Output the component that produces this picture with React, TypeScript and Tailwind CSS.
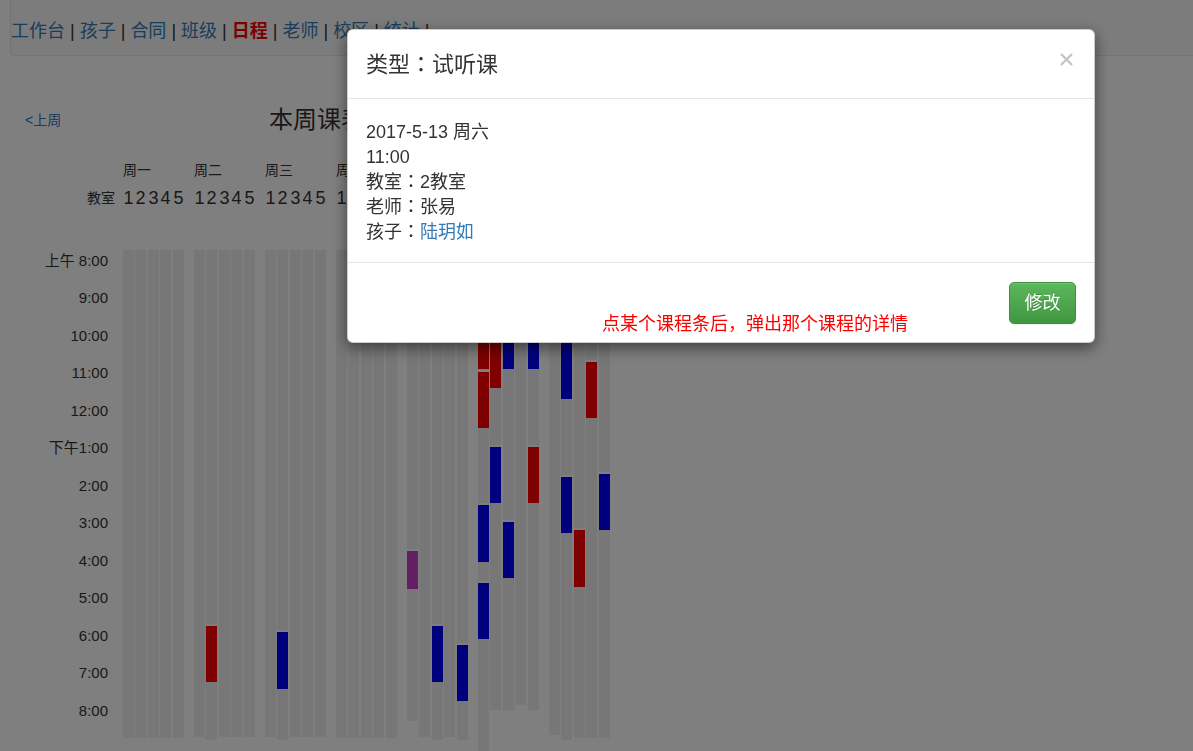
import React from 'react';

type Block = [number, number, 'r' | 'b' | 'p'];
interface Col {
  end: number;
  blocks: Block[];
}

const TOP = 250;

const BLOCK_BG: Record<Block[2], string> = {
  r: 'bg-[#ff0000]',
  b: 'bg-[#0000ff]',
  p: 'bg-[#c63fc9]',
};

const COL_GAP = ['', 'ml-[1px]', 'ml-[2px]', 'ml-[1px]', 'ml-[2px]'];

const plain = (end: number): Col => ({ end, blocks: [] });

const DAYS: { name: string; cols: Col[] }[] = [
  { name: '周一', cols: [plain(738), plain(738), plain(738), plain(738), plain(738)] },
  {
    name: '周二',
    cols: [plain(737), { end: 740, blocks: [[626, 682, 'r']] }, plain(737), plain(737), plain(737)],
  },
  {
    name: '周三',
    cols: [plain(737), { end: 740, blocks: [[632, 689, 'b']] }, plain(737), plain(737), plain(737)],
  },
  { name: '周四', cols: [plain(738), plain(738), plain(738), plain(738), plain(738)] },
  {
    name: '周五',
    cols: [
      { end: 721, blocks: [[551, 589, 'p']] },
      plain(737),
      { end: 740, blocks: [[626, 682, 'b']] },
      plain(737),
      { end: 740, blocks: [[645, 701, 'b']] },
    ],
  },
  {
    name: '周六',
    cols: [
      {
        end: 762,
        blocks: [
          [313, 369, 'r'],
          [372, 428, 'r'],
          [505, 562, 'b'],
          [583, 639, 'b'],
        ],
      },
      {
        end: 710,
        blocks: [
          [332, 388, 'r'],
          [447, 503, 'b'],
        ],
      },
      {
        end: 710,
        blocks: [
          [313, 369, 'b'],
          [522, 578, 'b'],
        ],
      },
      plain(705),
      {
        end: 710,
        blocks: [
          [313, 369, 'b'],
          [447, 503, 'r'],
        ],
      },
    ],
  },
  {
    name: '周日',
    cols: [
      plain(735),
      {
        end: 740,
        blocks: [
          [343, 399, 'b'],
          [477, 533, 'b'],
        ],
      },
      { end: 738, blocks: [[530, 587, 'r']] },
      { end: 738, blocks: [[362, 418, 'r']] },
      { end: 738, blocks: [[474, 530, 'b']] },
    ],
  },
];

const HOURS = [
  '上午 8:00',
  '9:00',
  '10:00',
  '11:00',
  '12:00',
  '下午1:00',
  '2:00',
  '3:00',
  '4:00',
  '5:00',
  '6:00',
  '7:00',
  '8:00',
];

const NAV = ['工作台', '孩子', '合同', '班级', '日程', '老师', '校区', '统计'];

function Column({ col, className }: { col: Col; className: string }) {
  const segs: React.ReactNode[] = [];
  let y = TOP;
  col.blocks.forEach(([top, bottom, c], i) => {
    const gap = top - y;
    if (gap > 2) {
      segs.push(<div key={`g${i}`} className="bg-[#eeeeee]" style={{ height: gap - 2 }} />);
      segs.push(<div key={`s${i}`} style={{ height: 2 }} />);
    } else if (gap > 0) {
      segs.push(<div key={`s${i}`} style={{ height: gap }} />);
    }
    segs.push(<div key={`b${i}`} className={BLOCK_BG[c]} style={{ height: bottom - top }} />);
    y = bottom;
  });
  if (col.end > y) {
    segs.push(<div key="end" className="bg-[#eeeeee]" style={{ height: col.end - y }} />);
  }
  return <div className={`flex w-[11px] shrink-0 flex-col ${className}`}>{segs}</div>;
}

export default function App() {
  return (
    <div className="relative h-[751px] overflow-hidden bg-white font-['Liberation_Sans','Noto_Sans_CJK_SC',sans-serif] text-[#333]">
      {/* top nav */}
      <div className="ml-[10px] flex h-[56px] w-[1200px] items-center rounded-bl-[4px] border-b border-l border-[#e7e7e7] bg-[#f9f9f9] pt-[7px] text-[18px] whitespace-pre">
        {NAV.map((item) => (
          <React.Fragment key={item}>
            <a className={item === '日程' ? 'font-bold text-[#ff0000]' : 'text-[#337ab7]'}>{item}</a>
            <span className="text-[#333]"> | </span>
          </React.Fragment>
        ))}
      </div>

      {/* week switcher + title */}
      <div className="mt-[44px] flex h-[40px] items-center">
        <div className="w-[269px] pl-[25px] text-[14px] text-[#337ab7]">&lt;上周</div>
        <h2 className="text-[24px] leading-none text-[#333]">本周课表</h2>
      </div>

      {/* day names */}
      <div className="mt-[20px] flex h-[20px] items-center pl-[123px] text-[14px]">
        {DAYS.map((d, i) => (
          <div key={d.name} className={`w-[61px] ${i ? 'ml-[10px]' : ''}`}>
            {d.name}
          </div>
        ))}
      </div>

      {/* classroom numbers */}
      <div className="mt-[6px] flex h-[24px] items-center">
        <div className="w-[123px] pr-[8px] text-right text-[14px]">教室</div>
        <div className="flex gap-[10px]">
          {DAYS.map((d) => (
            <div key={d.name} className="flex w-[61px] text-[18px] leading-none">
              {[1, 2, 3, 4, 5].map((n, j) => (
                <span key={n} className={`w-[11px] text-center ${COL_GAP[j]}`}>
                  {n}
                </span>
              ))}
            </div>
          ))}
        </div>
      </div>

      {/* grid */}
      <div className="mt-[40px] flex items-start">
        <div className="mt-[-8px] w-[108px] text-[15px]">
          {HOURS.map((h) => (
            <div key={h} className="flex h-[37.5px] items-center justify-end whitespace-pre">
              {h}
            </div>
          ))}
        </div>
        <div className="ml-[15px] flex items-start gap-[10px]">
          {DAYS.map((d) => (
            <div key={d.name} className="flex w-[61px] items-start">
              {d.cols.map((c, j) => (
                <Column key={j} col={c} className={COL_GAP[j]} />
              ))}
            </div>
          ))}
        </div>
      </div>

      {/* backdrop */}
      <div className="fixed inset-0 bg-black/50" />

      {/* course detail modal (TC font: full-width colons sit centred like the original) */}
      <div className="fixed top-[29px] left-[347px] w-[748px] rounded-[6px] border border-black/20 bg-white font-['Liberation_Sans','Noto_Sans_CJK_TC',sans-serif] shadow-[0_5px_15px_rgba(0,0,0,0.5)]">
        <div className="relative border-b border-[#e5e5e5] px-[18px] pt-[19px] pb-[18px]">
          <h4 className="text-[22px] leading-[31px] text-[#333]">类型：试听课</h4>
          <button className="absolute top-[23px] right-[21px] p-0">
            <svg width="13" height="13" viewBox="0 0 13 13">
              <path d="M1 1L12 12M12 1L1 12" stroke="#c5c5c5" strokeWidth="2.4" />
            </svg>
          </button>
        </div>
        <div className="px-[18px] pt-[21px] pb-[17px] text-[18px] leading-[25px] text-[#333]">
          <div>2017-5-13 周六</div>
          <div>11:00</div>
          <div>教室：2教室</div>
          <div>老师：张易</div>
          <div>
            孩子：<a className="text-[#337ab7]">陆玥如</a>
          </div>
        </div>
        <div className="flex h-[80px] items-end justify-end border-t border-[#e5e5e5] px-[18px] pb-[18px]">
          <span className="mr-[101px] mb-[-13px] font-['Liberation_Sans','Noto_Sans_CJK_SC',sans-serif] text-[18px] leading-[25px] text-[#ff0000]">
            点某个课程条后，弹出那个课程的详情
          </span>
          <button className="h-[42px] w-[67px] rounded-[5px] border border-[#3e8f3e] bg-[linear-gradient(to_bottom,#5cb85c,#419641)] text-[18px] text-white shadow-[inset_0_1px_0_rgba(255,255,255,0.15),0_1px_1px_rgba(0,0,0,0.075)] [text-shadow:0_-1px_0_rgba(0,0,0,0.2)]">
            修改
          </button>
        </div>
      </div>
    </div>
  );
}
